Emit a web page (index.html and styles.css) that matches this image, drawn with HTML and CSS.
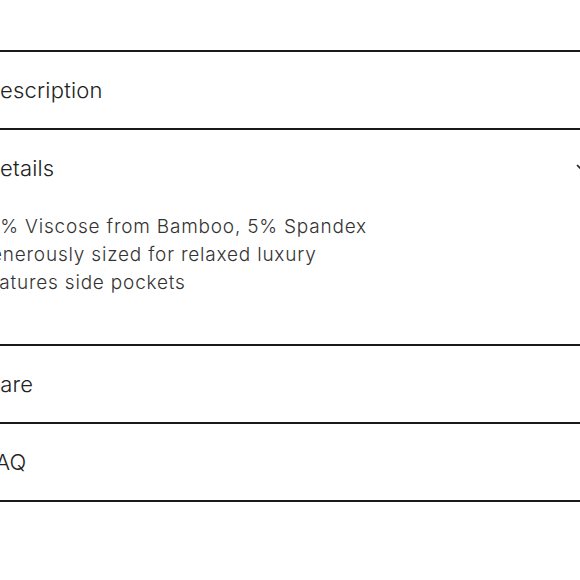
FILE: index.html
```html
<!DOCTYPE html>
<html lang="en">
<head>
<meta charset="utf-8">
<title>Product details</title>
<link rel="stylesheet" href="styles.css">
</head>
<body>
<div class="page">
  <section class="accordion">
    <div class="item">
      <div class="item-header"><span class="item-title">Description</span></div>
    </div>
    <div class="item open">
      <div class="item-header">
        <span class="item-title">Details</span>
        <svg class="chevron" width="14" height="10" viewBox="0 0 14 10" aria-hidden="true"><path d="M1 2 L7 8 L13 2" fill="none" stroke="#222" stroke-width="1.6"/></svg>
      </div>
      <div class="item-body">
        <p>95% Viscose from Bamboo, 5% Spandex</p>
        <p>Generously sized for relaxed luxury</p>
        <p>Features side pockets</p>
      </div>
    </div>
    <div class="item">
      <div class="item-header"><span class="item-title">Care</span></div>
    </div>
    <div class="item">
      <div class="item-header"><span class="item-title">FAQ</span></div>
    </div>
  </section>
</div>
</body>
</html>
```
FILE: styles.css
```css
html, body {
  margin: 0;
  padding: 0;
  background: #fff;
  overflow: hidden;
}
.page {
  width: 580px;
  height: 580px;
  overflow: hidden;
  padding-top: 50px;
  box-sizing: border-box;
}
.accordion {
  margin-left: -24px;
  width: 620px;
  border-bottom: 2px solid #1a1a1a;
  font-family: "Inter", "Open Sans", sans-serif;
  font-weight: 300;
  color: #222;
}
.item {
  border-top: 2px solid #1a1a1a;
}
.item-header {
  height: 76px;
  padding-left: 8px;
  display: flex;
  align-items: center;
  justify-content: space-between;
}
.item-title {
  font-size: 22px;
  letter-spacing: 0.2px;
}
.chevron {
  margin-right: 6px;
}
.item-body {
  padding: 7px 0 47px 0;
  font-size: 19px;
  line-height: 28px;
  letter-spacing: 0.8px;
  color: #333;
}
.item-body p {
  margin: 0;
}
```
